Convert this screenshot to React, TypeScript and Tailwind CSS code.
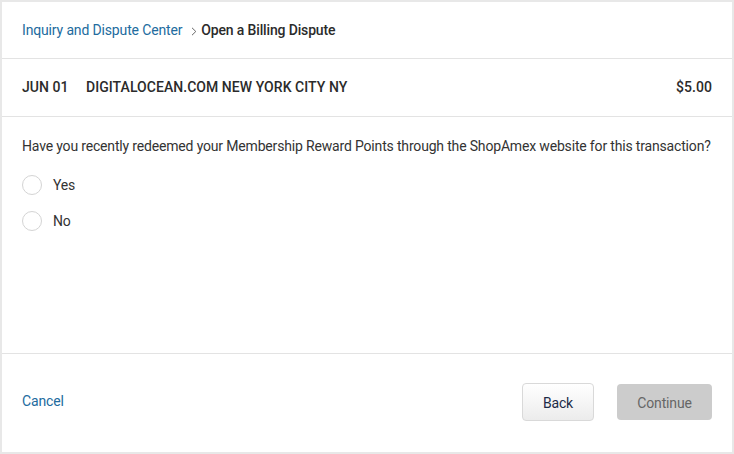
import React from "react";

const font = { fontFamily: 'Roboto, "Liberation Sans", Arial, sans-serif', letterSpacing: "-0.15px" };

function Radio({ label }: { label: string }) {
  return (
    <label className="flex items-center h-[20px] gap-[11px] text-[14px] text-[#333]">
      <span className="w-[20px] h-[20px] rounded-full border border-[#d4d4d4] bg-white" />
      <span>{label}</span>
    </label>
  );
}

export default function App() {
  return (
    <div className="w-[734px] h-[454px] bg-[#e8e8e8] p-[2px]" style={font}>
      <div className="bg-white h-full flex flex-col">
        <div className="h-[57px] shrink-0 border-b border-[#e3e3e3] px-[20px] flex items-center pt-[1px] text-[14px]">
          <span className="text-[#226b9e]">Inquiry and Dispute Center</span>
          <svg width="6" height="9" viewBox="0 0 6 9" className="ml-[9px] mr-[4px] mt-[1px]">
            <path d="M1 0.8 L4.8 4.5 L1 8.2" fill="none" stroke="#666" strokeWidth="1" />
          </svg>
          <span className="font-medium text-[#2b2b2b]">Open a Billing Dispute</span>
        </div>
        <div className="h-[58px] shrink-0 border-b border-[#e3e3e3] px-[20px] flex items-center text-[14px] font-medium text-[#2b2b2b] tracking-[0.05px]">
          <span className="w-[64px]">JUN 01</span>
          <span>DIGITALOCEAN.COM NEW YORK CITY NY</span>
          <span className="ml-auto">$5.00</span>
        </div>
        <div className="flex-1 px-[20px] pt-[20px]">
          <p className="text-[14px] text-[#333] leading-[18px] whitespace-nowrap tracking-[-0.17px]">
            Have you recently redeemed your Membership Reward Points through the ShopAmex website for this transaction?
          </p>
          <div className="mt-[20px] flex flex-col gap-[16px]">
            <Radio label="Yes" />
            <Radio label="No" />
          </div>
        </div>
        <div className="h-[99px] shrink-0 border-t border-[#e3e3e3] px-[20px] pb-[3px] flex items-center">
          <span className="text-[14px] text-[#226b9e]">Cancel</span>
          <div className="ml-auto flex items-center gap-[23px]">
            <button className="w-[72px] h-[38px] pt-[3px] rounded-[4px] border border-[#d9d9d9] bg-gradient-to-b from-white to-[#ececec] text-[14px] text-[#1c2b47]">
              Back
            </button>
            <button className="w-[95px] h-[36px] pt-[3px] rounded-[4px] bg-[#cccccc] text-[14px] text-[#666]">
              Continue
            </button>
          </div>
        </div>
      </div>
    </div>
  );
}
